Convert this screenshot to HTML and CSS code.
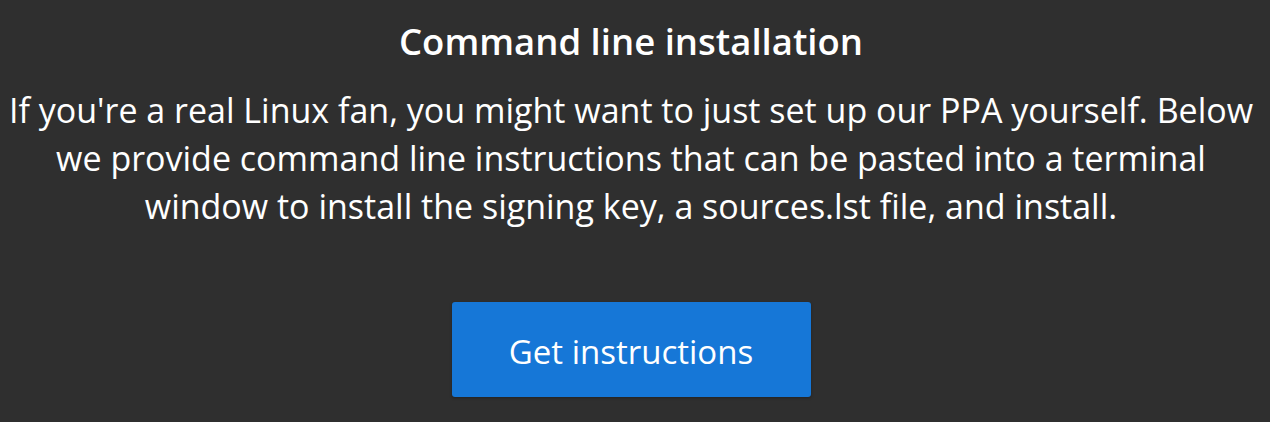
FILE: index.html
```html
<!DOCTYPE html>
<html lang="en">

<head>
    <meta charset="UTF-8">
    <meta name="viewport" content="width=device-width, initial-scale=1.0">
    <title>Command line installation</title>
    <link rel="stylesheet" href="styles.css">
</head>

<body>
    <section class="install">
        <h2>Command line installation</h2>
        <p>If you're a real Linux fan, you might want to just set up our PPA yourself. Below we provide command line instructions that can be pasted into a terminal window to install the signing key, a sources.lst file, and install.</p>
        <button class="btn">Get instructions</button>
    </section>
</body>

</html>
```

FILE: styles.css
```css
body {
    margin: 0;
    background: #2f2f2f;
    color: #fff;
    font-family: "Open Sans", "Noto Sans", sans-serif;
    height: 100vh;
    overflow: hidden;
}

.install {
    display: flex;
    flex-direction: column;
    align-items: center;
    text-align: center;
    padding: 17px 8px 0 0;
}

.install h2 {
    margin: 0;
    font-size: 36.5px;
    font-weight: 600;
    line-height: 48px;
}

.install p {
    margin: 21px 0 0;
    font-size: 34px;
    line-height: 48px;
    width: 1262px;
}

.btn {
    margin-top: 72px;
    width: 359px;
    height: 95px;
    padding: 4px 0 0;
    border: 0;
    border-radius: 3px;
    background: #1677d7;
    color: #fff;
    font-family: inherit;
    font-size: 33px;
    box-shadow: 0 1px 3px rgba(0, 0, 0, 0.3);
    cursor: pointer;
}
```
